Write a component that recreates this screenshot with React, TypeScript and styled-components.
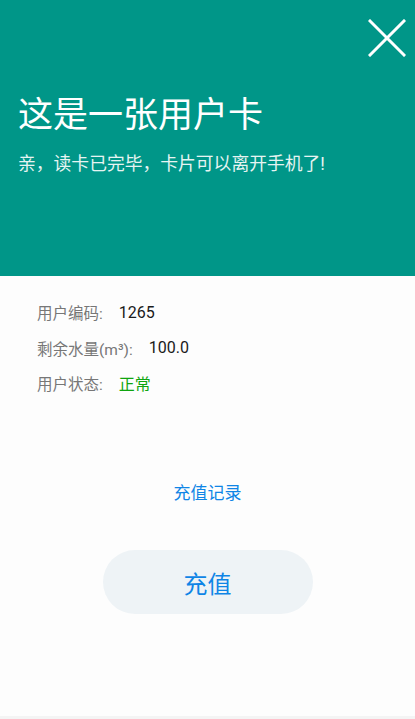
import React from "react";
import styled, { createGlobalStyle } from "styled-components";

const GlobalStyle = createGlobalStyle`
  body {
    margin: 0;
    background: #f4f4f4;
    font-family: Roboto, "Noto Sans CJK SC", sans-serif;
  }
`;

const Page = styled("div")`
  width: 415px;
  min-height: 716px;
  background: #fdfdfd;
  display: flex;
  flex-direction: column;
`;

const Header = styled("div")`
  height: 276px;
  box-sizing: border-box;
  background: #009688;
  padding: 19px 9px 0 18px;
  display: flex;
  flex-direction: column;
`;

const CloseRow = styled("div")`
  display: flex;
  justify-content: flex-end;
`;

const CloseButton = styled("button")`
  width: 38px;
  height: 38px;
  padding: 0;
  border: none;
  background: transparent;
  cursor: pointer;
`;

const Title = styled("h1")`
  margin: 38px 0 0 0;
  font-size: 35px;
  line-height: 41px;
  font-weight: 400;
  color: #ffffff;
`;

const SubTitle = styled("p")`
  margin: 16px 0 0 0;
  font-size: 17.8px;
  line-height: 24px;
  color: #e6f4f2;
`;

const InfoList = styled("div")`
  padding: 26px 0 0 37px;
  display: flex;
  flex-direction: column;
  gap: 15.5px;
`;

const Row = styled("div")`
  display: flex;
  align-items: center;
  height: 20px;
`;

const Label = styled("span")`
  color: #777777;
  font-size: 15.5px;
  margin-right: 16px;
`;

const Value = styled("span")<{ $color?: string }>`
  color: ${(p) => p.$color || "#1a1a1a"};
  font-size: 16px;
`;

const RecordLink = styled("a")`
  align-self: center;
  margin-top: 88px;
  font-size: 17px;
  line-height: 24px;
  color: #0f85e6;
  text-decoration: none;
`;

const ChargeButton = styled("button")`
  align-self: center;
  margin-top: 45px;
  width: 210px;
  height: 64px;
  border: none;
  border-radius: 32px;
  background: #eef3f6;
  color: #0f85e6;
  font-family: Roboto, "Noto Sans CJK SC", sans-serif;
  font-size: 24px;
  cursor: pointer;
`;

const CloseIcon = () => (
  <svg width="38" height="38" viewBox="0 0 38 38">
    <path
      d="M2 2 L36 36 M36 2 L2 36"
      stroke="#ffffff"
      strokeWidth="3"
      strokeLinecap="square"
    />
  </svg>
);

const App = () => (
  <>
    <GlobalStyle />
    <Page>
      <Header>
        <CloseRow>
          <CloseButton aria-label="关闭">
            <CloseIcon />
          </CloseButton>
        </CloseRow>
        <Title>这是一张用户卡</Title>
        <SubTitle>亲，读卡已完毕，卡片可以离开手机了!</SubTitle>
      </Header>
      <InfoList>
        <Row>
          <Label>用户编码:</Label>
          <Value>1265</Value>
        </Row>
        <Row>
          <Label>剩余水量(m³):</Label>
          <Value>100.0</Value>
        </Row>
        <Row>
          <Label>用户状态:</Label>
          <Value $color="#0fa50f">正常</Value>
        </Row>
      </InfoList>
      <RecordLink href="#">充值记录</RecordLink>
      <ChargeButton>充值</ChargeButton>
    </Page>
  </>
);

export default App;
